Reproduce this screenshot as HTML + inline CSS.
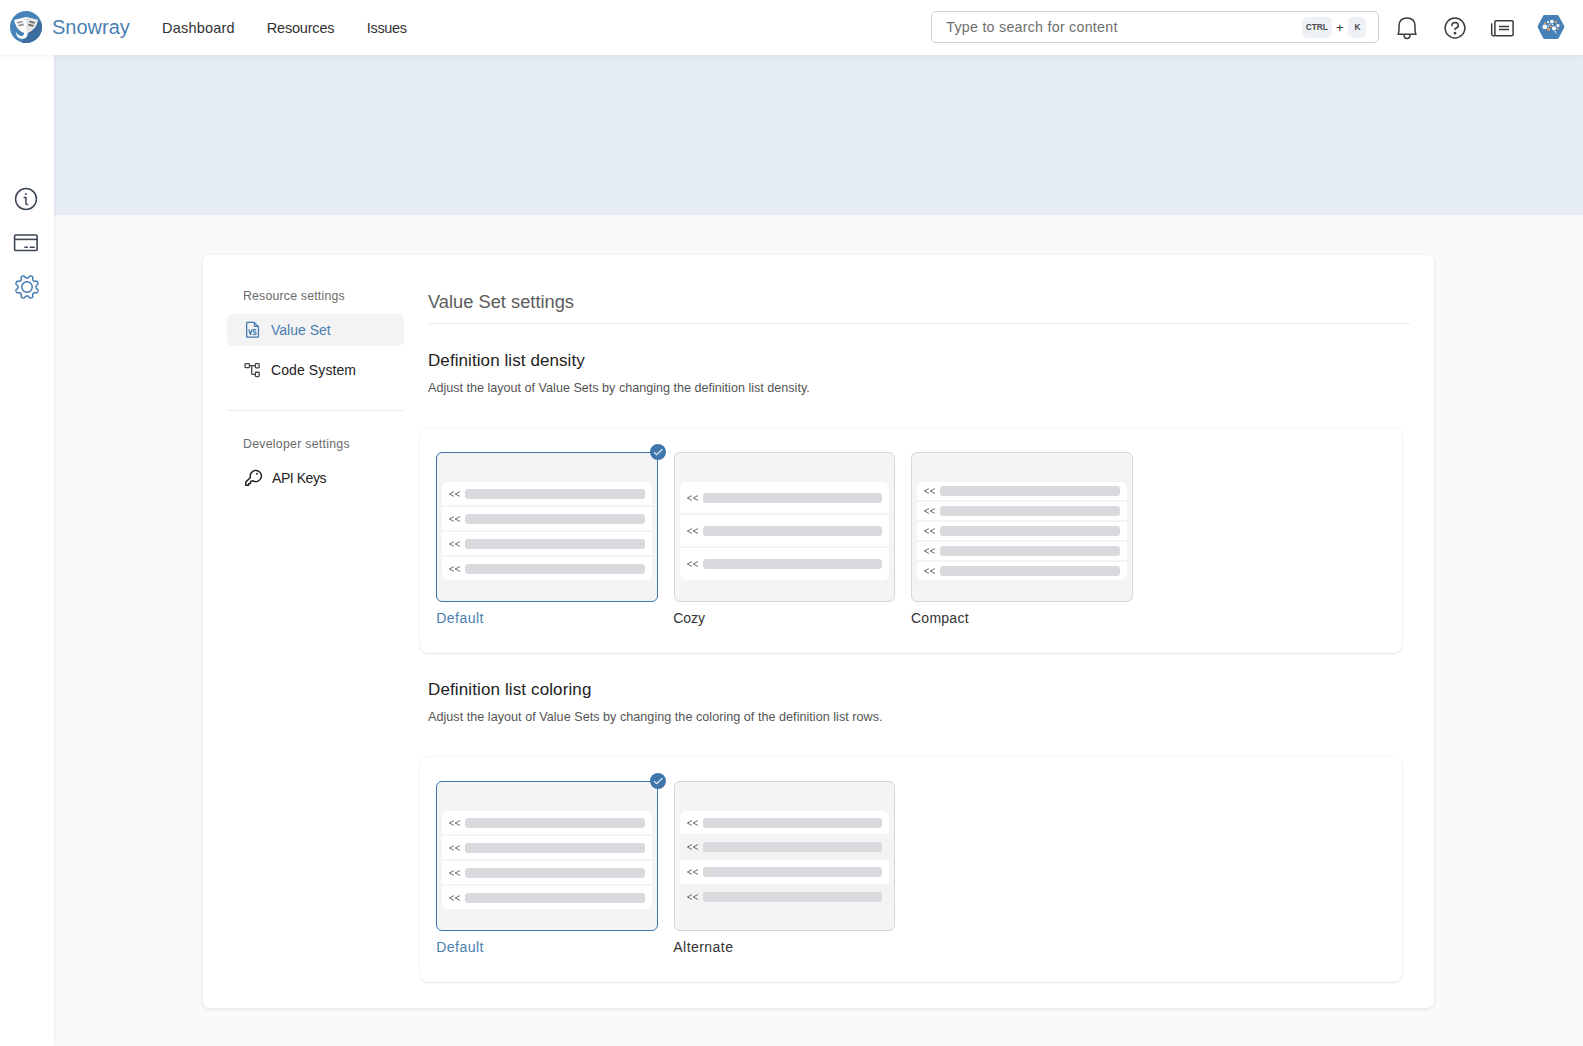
<!DOCTYPE html>
<html><head><meta charset="utf-8">
<style>
*{box-sizing:border-box;margin:0;padding:0}
html,body{width:1583px;height:1046px;overflow:hidden}
body{background:#f8fafc;font-family:"Liberation Sans",sans-serif;position:relative;color:#222}
.t{position:absolute;white-space:nowrap;line-height:1}
#header{position:absolute;left:0;top:0;width:1583px;height:55px;background:#fff;box-shadow:0 1px 5px rgba(0,0,0,.06);z-index:5}
#side{position:absolute;left:0;top:55px;width:54px;height:991px;background:#fff;box-shadow:1px 0 3px rgba(0,0,0,.05);z-index:4}
#banner{position:absolute;left:54px;top:55px;width:1529px;height:160px;background:#e6ecf4}
#card{position:absolute;left:203px;top:255px;width:1231px;height:753px;background:#fff;border-radius:7px;box-shadow:0 1px 4px rgba(0,0,0,.1)}
.sec{position:absolute;left:420px;width:982px;height:225px;background:#fff;border-radius:8px;box-shadow:0 0 0 1px rgba(0,0,0,.035),0 1px 2px rgba(0,0,0,.07)}
.pv{position:absolute;width:222px;height:150px;background:#f4f4f4;border:1px solid #d6d6d6;border-radius:6px}
.pv.sel{border-color:#4077ab}
.lst{position:absolute;left:5px;top:29px;width:210px;height:98px;border-radius:6px;overflow:hidden}
.row{position:absolute;left:0;width:210px;background:#fff}
.row .ch{position:absolute;left:6px}
.row .bar{position:absolute;left:23px;width:180px;height:10px;border-radius:3px;background:#d9dadd}
.chk{position:absolute;width:16px;height:16px;border-radius:50%;background:#4077ab}
.lbl{font-size:14px;color:#333}
.lbl.on{color:#4a7eb0}
</style></head><body>
<div id="header">
  <svg style="position:absolute;left:10px;top:11px" width="32" height="32" viewBox="0 0 32 32">
    <defs><clipPath id="cc"><circle cx="16" cy="16" r="16"/></clipPath></defs>
    <circle cx="16" cy="16" r="16" fill="#4683b9"/>
    <path clip-path="url(#cc)" d="M27.9 9 L40 18 L30 40 L11 40 L12.8 27.9 L17.3 24.8 L18.6 21.4 L22.8 18.6 L26.2 14.2 Z" fill="#3b6e9c"/>
    <path d="M4 9 Q10 7.4 16.2 6.1 Q22 7.6 27.9 9 Q27.2 12.2 26.2 14.2 Q24.8 16.8 22.8 18.6 Q20.8 20.4 18.4 21.6 Q17.6 22.2 17.5 23.5 Q17.4 25 16.4 26.2 Q14.8 28 12.4 28 Q9.6 28 7.6 26 Q6 24 5.9 21.1 Q7.2 23.3 9.4 24.4 Q11.4 25.4 13 24.4 Q14.4 23.4 14.2 22.1 Q11.4 20.8 9.4 19.3 Q7.4 17.6 6.3 15.2 Q4.8 12.2 4 9 Z" fill="#ffffff"/>
    <path d="M16.2 6.1 Q22 7.6 27.9 9 Q27.2 12.2 26.2 14.2 Q24.8 16.8 22.8 18.6 Q20.8 20.4 18.4 21.6 Q17.4 22.2 16.2 22.4 Z" fill="#e6e6e6"/>
    <path d="M7.1 11.8 L12.6 10.6 M8.3 14.7 L13.8 13.5" stroke="#9c9c9c" stroke-width="1.8"/>
    <path d="M19.3 10.5 L24.7 11.9 M18.3 13.6 L23.6 14.8" stroke="#6a6a6a" stroke-width="1.8"/>
    <circle cx="14.2" cy="8.6" r="0.45" fill="#4683b9"/><circle cx="17.6" cy="8.6" r="0.45" fill="#4683b9"/>
  </svg>
  <div class="t" style="left:52px;top:16.9px;font-size:20px;color:#4a7fb5">Snowray</div>
  <div class="t" style="left:162px;top:20.6px;font-size:14.5px;letter-spacing:0.2px;color:#333">Dashboard</div>
  <div class="t" style="left:266.8px;top:20.6px;font-size:14.5px;letter-spacing:-0.2px;color:#333">Resources</div>
  <div class="t" style="left:366.8px;top:20.6px;font-size:14.5px;letter-spacing:-0.35px;color:#333">Issues</div>
  <!-- search -->
  <div style="position:absolute;left:931px;top:11px;width:448px;height:32px;border:1px solid #cfd3d9;border-radius:5px;background:#fff"></div>
  <div class="t" style="left:946.3px;top:20px;font-size:14.2px;letter-spacing:0.28px;color:#6e6e6e">Type to search for content</div>
  <div style="position:absolute;left:1302px;top:17px;width:30px;height:20px;border-radius:5px;background:#eef2f7;box-shadow:0 1px 1px rgba(0,0,0,.06)"></div>
  <div class="t" style="left:1305.8px;top:22.9px;font-size:8.4px;font-weight:700;letter-spacing:-0.1px;color:#4a4a4a">CTRL</div>
  <div class="t" style="left:1336px;top:20.6px;font-size:13px;color:#333">+</div>
  <div style="position:absolute;left:1348px;top:17px;width:18px;height:20px;border-radius:5px;background:#eef2f7;box-shadow:0 1px 1px rgba(0,0,0,.06)"></div>
  <div class="t" style="left:1354.5px;top:22.9px;font-size:8.4px;font-weight:700;color:#4a4a4a">K</div>
  <!-- bell -->
  <svg style="position:absolute;left:1395px;top:15px" width="24" height="26" viewBox="0 0 24 26" fill="none" stroke="#3c3c3c" stroke-width="1.5" stroke-linejoin="round">
    <path d="M3 19.3 Q4 17.5 4 14 L4 10.5 Q4.5 3 12 3 Q19.5 3 20 10.5 L20 14 Q20 17.5 21 19.3 Z"/>
    <path d="M9 19.8 Q9 23.6 12 23.6 Q15 23.6 15 19.8"/>
  </svg>
  <!-- help -->
  <svg style="position:absolute;left:1443px;top:16px" width="24" height="24" viewBox="0 0 24 24" fill="none" stroke="#3c3c3c" stroke-width="1.5">
    <circle cx="12" cy="12" r="9.9"/>
    <path d="M8.8 10.3 Q8.9 6.6 12 6.6 Q15.3 6.7 15.3 9.6 Q15.2 11.6 12.1 12.7 L12.1 13.9"/>
    <circle cx="12.05" cy="17.2" r="0.65" fill="#3c3c3c"/>
  </svg>
  <!-- news -->
  <svg style="position:absolute;left:1488px;top:17px" width="28" height="22" viewBox="0 0 28 22" fill="none" stroke="#3c3c3c" stroke-width="1.5" stroke-linejoin="round">
    <rect x="6.9" y="3.7" width="18.2" height="15" rx="1.2"/>
    <path d="M3.7 6.3 L3.7 17 Q3.7 18.7 5.3 18.7 L7 18.7"/>
    <path d="M11 9.4 L21 9.4 M11 12.4 L21 12.4"/>
  </svg>
  <!-- avatar -->
  <svg style="position:absolute;left:1537px;top:14px" width="28" height="26" viewBox="0 0 28 26">
    <path d="M6.2 1.6 Q6.8 1 7.8 1 L20 1 Q21 1 21.6 1.8 L27 11.6 Q27.5 12.8 27 14 L21.6 24.2 Q21 25 20 25 L7.8 25 Q6.8 25 6.2 24.2 L1 14 Q0.5 12.8 1 11.6 Z" fill="#4682b8"/>
    <g fill="#fff">
      <circle cx="7.8" cy="12.9" r="2.4"/>
      <circle cx="10.9" cy="8" r="1.1"/>
      <circle cx="14.9" cy="7.6" r="1.9"/>
      <circle cx="20.9" cy="11.6" r="1.6"/>
      <circle cx="17" cy="14.4" r="2.1"/>
      <circle cx="11.3" cy="12.3" r="0.7"/>
      <circle cx="12.3" cy="10.2" r="0.7"/>
      <circle cx="15.6" cy="10.6" r="0.8"/>
      <circle cx="18.2" cy="17.8" r="0.7"/>
      <circle cx="19.3" cy="19.2" r="0.55"/>
    </g>
    <g fill="#f5a458">
      <circle cx="7.9" cy="9.3" r="1"/>
      <circle cx="18.9" cy="8.3" r="1.1"/>
      <circle cx="13.8" cy="12.3" r="0.95"/>
      <circle cx="11.5" cy="15.3" r="1.5"/>
      <circle cx="20.8" cy="14.7" r="0.9"/>
    </g>
  </svg>
</div>

<div id="side">
  <!-- info -->
  <svg style="position:absolute;left:13px;top:131px" width="26" height="26" viewBox="0 0 26 26" fill="none" stroke="#3e4756" stroke-width="1.5">
    <circle cx="13" cy="13" r="10.45"/>
    <path d="M11.1 11.5 L12.9 11.5 L12.9 17.4 Q12.9 18.6 14.6 18.6" stroke-width="1.5" stroke-linecap="round"/>
    <circle cx="12.8" cy="7.9" r="1" fill="#3e4756" stroke="none"/>
  </svg>
  <!-- card -->
  <svg style="position:absolute;left:12px;top:177px" width="28" height="22" viewBox="0 0 28 22" fill="none" stroke="#3e4756" stroke-width="1.6">
    <rect x="2.6" y="2.95" width="22.5" height="15.6" rx="1.1"/>
    <path d="M2.6 7.4 L25.1 7.4"/>
    <path d="M12.9 15.2 L15.3 15.2 M18.3 15.2 L22.2 15.2" stroke-linecap="round"/>
  </svg>
  <!-- gear -->
  <svg style="position:absolute;left:12px;top:217px" width="30" height="30" viewBox="0 0 30 30" fill="none" stroke="#3f79b2" stroke-width="1.45" stroke-linejoin="round">
    <path d="M15.00 6.00 L15.24 6.00 L15.47 5.99 L15.71 5.96 L15.96 5.89 L16.22 5.75 L16.51 5.49 L16.84 5.08 L17.21 4.62 L17.58 4.24 L17.94 4.02 L18.28 3.93 L18.59 3.94 L18.90 4.00 L19.19 4.08 L19.48 4.19 L19.76 4.32 L20.03 4.46 L20.28 4.64 L20.51 4.86 L20.69 5.15 L20.78 5.56 L20.78 6.10 L20.71 6.69 L20.66 7.21 L20.68 7.60 L20.76 7.88 L20.89 8.10 L21.04 8.29 L21.20 8.47 L21.36 8.64 L21.53 8.80 L21.71 8.96 L21.90 9.11 L22.12 9.24 L22.40 9.32 L22.79 9.34 L23.31 9.29 L23.90 9.22 L24.44 9.22 L24.85 9.31 L25.14 9.49 L25.36 9.72 L25.54 9.97 L25.68 10.24 L25.81 10.52 L25.92 10.81 L26.00 11.10 L26.06 11.41 L26.07 11.72 L25.98 12.06 L25.76 12.42 L25.38 12.79 L24.92 13.16 L24.51 13.49 L24.25 13.78 L24.11 14.04 L24.04 14.29 L24.01 14.53 L24.00 14.76 L24.00 15.00 L24.00 15.24 L24.01 15.47 L24.04 15.71 L24.11 15.96 L24.25 16.22 L24.51 16.51 L24.92 16.84 L25.38 17.21 L25.76 17.58 L25.98 17.94 L26.07 18.28 L26.06 18.59 L26.00 18.90 L25.92 19.19 L25.81 19.48 L25.68 19.76 L25.54 20.03 L25.36 20.28 L25.14 20.51 L24.85 20.69 L24.44 20.78 L23.90 20.78 L23.31 20.71 L22.79 20.66 L22.40 20.68 L22.12 20.76 L21.90 20.89 L21.71 21.04 L21.53 21.20 L21.36 21.36 L21.20 21.53 L21.04 21.71 L20.89 21.90 L20.76 22.12 L20.68 22.40 L20.66 22.79 L20.71 23.31 L20.78 23.90 L20.78 24.44 L20.69 24.85 L20.51 25.14 L20.28 25.36 L20.03 25.54 L19.76 25.68 L19.48 25.81 L19.19 25.92 L18.90 26.00 L18.59 26.06 L18.28 26.07 L17.94 25.98 L17.58 25.76 L17.21 25.38 L16.84 24.92 L16.51 24.51 L16.22 24.25 L15.96 24.11 L15.71 24.04 L15.47 24.01 L15.24 24.00 L15.00 24.00 L14.76 24.00 L14.53 24.01 L14.29 24.04 L14.04 24.11 L13.78 24.25 L13.49 24.51 L13.16 24.92 L12.79 25.38 L12.42 25.76 L12.06 25.98 L11.72 26.07 L11.41 26.06 L11.10 26.00 L10.81 25.92 L10.52 25.81 L10.24 25.68 L9.97 25.54 L9.72 25.36 L9.49 25.14 L9.31 24.85 L9.22 24.44 L9.22 23.90 L9.29 23.31 L9.34 22.79 L9.32 22.40 L9.24 22.12 L9.11 21.90 L8.96 21.71 L8.80 21.53 L8.64 21.36 L8.47 21.20 L8.29 21.04 L8.10 20.89 L7.88 20.76 L7.60 20.68 L7.21 20.66 L6.69 20.71 L6.10 20.78 L5.56 20.78 L5.15 20.69 L4.86 20.51 L4.64 20.28 L4.46 20.03 L4.32 19.76 L4.19 19.48 L4.08 19.19 L4.00 18.90 L3.94 18.59 L3.93 18.28 L4.02 17.94 L4.24 17.58 L4.62 17.21 L5.08 16.84 L5.49 16.51 L5.75 16.22 L5.89 15.96 L5.96 15.71 L5.99 15.47 L6.00 15.24 L6.00 15.00 L6.00 14.76 L5.99 14.53 L5.96 14.29 L5.89 14.04 L5.75 13.78 L5.49 13.49 L5.08 13.16 L4.62 12.79 L4.24 12.42 L4.02 12.06 L3.93 11.72 L3.94 11.41 L4.00 11.10 L4.08 10.81 L4.19 10.52 L4.32 10.24 L4.46 9.97 L4.64 9.72 L4.86 9.49 L5.15 9.31 L5.56 9.22 L6.10 9.22 L6.69 9.29 L7.21 9.34 L7.60 9.32 L7.88 9.24 L8.10 9.11 L8.29 8.96 L8.47 8.80 L8.64 8.64 L8.80 8.47 L8.96 8.29 L9.11 8.10 L9.24 7.88 L9.32 7.60 L9.34 7.21 L9.29 6.69 L9.22 6.10 L9.22 5.56 L9.31 5.15 L9.49 4.86 L9.72 4.64 L9.97 4.46 L10.24 4.32 L10.52 4.19 L10.81 4.08 L11.10 4.00 L11.41 3.94 L11.72 3.93 L12.06 4.02 L12.42 4.24 L12.79 4.62 L13.16 5.08 L13.49 5.49 L13.78 5.75 L14.04 5.89 L14.29 5.96 L14.53 5.99 L14.76 6.00Z"/>
    <circle cx="15" cy="15" r="5.25"/>
  </svg>
</div>

<div id="banner"></div>
<div id="card"></div>

<!-- settings nav -->
<div class="t" style="left:243px;top:289.6px;font-size:12.3px;letter-spacing:0.2px;color:#6b6b6b">Resource settings</div>
<div style="position:absolute;left:227px;top:314px;width:177px;height:32px;background:#f3f3f3;border-radius:6px"></div>
<svg style="position:absolute;left:244px;top:320px" width="16" height="19" viewBox="0 0 16 19" fill="none" stroke="#4179b0" stroke-width="1.3" stroke-linejoin="round">
  <path d="M3.4 2.35 L10.1 2.35 L14.45 6.7 L14.45 16.4 Q14.45 17.15 13.7 17.15 L3.4 17.15 Q2.65 17.15 2.65 16.4 L2.65 3.1 Q2.65 2.35 3.4 2.35 Z"/>
  <path d="M10.4 2.6 L10.4 6.4 L14.2 6.4" stroke-width="1.1"/>
  <path d="M4.8 9.4 L6.45 14.5 L8.1 9.4" stroke-width="1.35"/>
  <path d="M12.1 9.9 Q11.4 9.3 10.5 9.3 Q9.1 9.4 9.1 10.7 Q9.2 11.7 10.6 12 Q12.1 12.4 12.1 13.4 Q12 14.6 10.5 14.6 Q9.5 14.6 8.9 14" stroke-width="1.3"/>
</svg>
<div class="t" style="left:271px;top:323.2px;font-size:14px;color:#4a7eb0">Value Set</div>
<svg style="position:absolute;left:243px;top:361px" width="19" height="18" viewBox="0 0 19 18" fill="none" stroke="#444" stroke-width="1.3">
  <rect x="2.05" y="2.55" width="4.4" height="4.1" rx="0.8"/>
  <rect x="12.35" y="2.55" width="3.8" height="4.4" rx="0.8"/>
  <rect x="12.35" y="11.25" width="3.8" height="4.4" rx="0.8"/>
  <path d="M6.45 4.6 L12.35 4.6 M8.7 4.6 L8.7 12.4 Q8.7 13.45 9.8 13.45 L12.35 13.45"/>
</svg>
<div class="t" style="left:271px;top:363px;font-size:14px;letter-spacing:0.1px;color:#222">Code System</div>
<div style="position:absolute;left:227px;top:410px;width:177px;height:1px;background:#ececec"></div>
<div class="t" style="left:243px;top:437.6px;font-size:12.3px;letter-spacing:0.28px;color:#6b6b6b">Developer settings</div>
<svg style="position:absolute;left:242px;top:467px" width="22" height="22" viewBox="0 0 22 22" fill="none" stroke="#1a1a1a" stroke-width="1.4" stroke-linejoin="round">
  <path d="M8.4 10.4 L3.8 15 L3.8 18.3 L6.6 18.3 L6.6 16.6 L8.5 16.6 L8.5 14.7 L10.6 13.6 A5.6 5.6 0 1 0 8.4 10.4 Z"/>
  <rect x="14.1" y="5.9" width="1.6" height="1.6" fill="#1a1a1a" stroke="none"/>
</svg>
<div class="t" style="left:272px;top:471.3px;font-size:14px;letter-spacing:-0.45px;color:#222">API Keys</div>

<!-- main -->
<div class="t" style="left:428px;top:292.5px;font-size:18.3px;color:#5c5c5c">Value Set settings</div>
<div style="position:absolute;left:428px;top:323px;width:982px;height:1px;background:#ececec"></div>
<div class="t" style="left:428px;top:351.6px;font-size:17px;letter-spacing:0.08px;color:#222">Definition list density</div>
<div class="t" style="left:428px;top:381.6px;font-size:12.6px;color:#555">Adjust the layout of Value Sets by changing the definition list density.</div>

<div class="sec" style="top:428px"></div>

<!-- density previews -->
<div class="pv sel" style="left:436px;top:452px">
  <div class="lst">
    <div class="row" style="top:0;height:23px"><svg class="ch" style="top:7.90px" width="14" height="8" viewBox="0 0 14 8"><path d="M5.9 1.6 L1.35 4 L5.9 6.4 M11.96 1.6 L7.2 4 L11.96 6.4" fill="none" stroke="#626262" stroke-width="0.95"/></svg><span class="bar" style="top:6.5px"></span></div>
    <div class="row" style="top:25px;height:23px"><svg class="ch" style="top:7.90px" width="14" height="8" viewBox="0 0 14 8"><path d="M5.9 1.6 L1.35 4 L5.9 6.4 M11.96 1.6 L7.2 4 L11.96 6.4" fill="none" stroke="#626262" stroke-width="0.95"/></svg><span class="bar" style="top:6.5px"></span></div>
    <div class="row" style="top:50px;height:23px"><svg class="ch" style="top:7.90px" width="14" height="8" viewBox="0 0 14 8"><path d="M5.9 1.6 L1.35 4 L5.9 6.4 M11.96 1.6 L7.2 4 L11.96 6.4" fill="none" stroke="#626262" stroke-width="0.95"/></svg><span class="bar" style="top:6.5px"></span></div>
    <div class="row" style="top:75px;height:23px"><svg class="ch" style="top:7.90px" width="14" height="8" viewBox="0 0 14 8"><path d="M5.9 1.6 L1.35 4 L5.9 6.4 M11.96 1.6 L7.2 4 L11.96 6.4" fill="none" stroke="#626262" stroke-width="0.95"/></svg><span class="bar" style="top:6.5px"></span></div>
  </div>
</div>
<div class="chk" style="left:650px;top:444px"><svg width="16" height="16" viewBox="0 0 16 16"><path d="M4.05 8.2 L6.6 10.6 L12.4 5.3" fill="none" stroke="#e3eaf2" stroke-width="1.2"/></svg></div>

<div class="pv" style="left:674px;top:452px;width:221px">
  <div class="lst" style="width:209px">
    <div class="row" style="width:209px;top:0;height:31px"><svg class="ch" style="top:11.90px" width="14" height="8" viewBox="0 0 14 8"><path d="M5.9 1.6 L1.35 4 L5.9 6.4 M11.96 1.6 L7.2 4 L11.96 6.4" fill="none" stroke="#626262" stroke-width="0.95"/></svg><span class="bar" style="width:179px;top:10.5px"></span></div>
    <div class="row" style="width:209px;top:33px;height:31px"><svg class="ch" style="top:11.90px" width="14" height="8" viewBox="0 0 14 8"><path d="M5.9 1.6 L1.35 4 L5.9 6.4 M11.96 1.6 L7.2 4 L11.96 6.4" fill="none" stroke="#626262" stroke-width="0.95"/></svg><span class="bar" style="width:179px;top:10.5px"></span></div>
    <div class="row" style="width:209px;top:66px;height:32px"><svg class="ch" style="top:11.90px" width="14" height="8" viewBox="0 0 14 8"><path d="M5.9 1.6 L1.35 4 L5.9 6.4 M11.96 1.6 L7.2 4 L11.96 6.4" fill="none" stroke="#626262" stroke-width="0.95"/></svg><span class="bar" style="width:179px;top:10.5px"></span></div>
  </div>
</div>

<div class="pv" style="left:911px;top:452px">
  <div class="lst">
    <div class="row" style="top:0;height:18px"><svg class="ch" style="top:5.40px" width="14" height="8" viewBox="0 0 14 8"><path d="M5.9 1.6 L1.35 4 L5.9 6.4 M11.96 1.6 L7.2 4 L11.96 6.4" fill="none" stroke="#626262" stroke-width="0.95"/></svg><span class="bar" style="top:4px"></span></div>
    <div class="row" style="top:20px;height:18px"><svg class="ch" style="top:5.40px" width="14" height="8" viewBox="0 0 14 8"><path d="M5.9 1.6 L1.35 4 L5.9 6.4 M11.96 1.6 L7.2 4 L11.96 6.4" fill="none" stroke="#626262" stroke-width="0.95"/></svg><span class="bar" style="top:4px"></span></div>
    <div class="row" style="top:40px;height:18px"><svg class="ch" style="top:5.40px" width="14" height="8" viewBox="0 0 14 8"><path d="M5.9 1.6 L1.35 4 L5.9 6.4 M11.96 1.6 L7.2 4 L11.96 6.4" fill="none" stroke="#626262" stroke-width="0.95"/></svg><span class="bar" style="top:4px"></span></div>
    <div class="row" style="top:60px;height:18px"><svg class="ch" style="top:5.40px" width="14" height="8" viewBox="0 0 14 8"><path d="M5.9 1.6 L1.35 4 L5.9 6.4 M11.96 1.6 L7.2 4 L11.96 6.4" fill="none" stroke="#626262" stroke-width="0.95"/></svg><span class="bar" style="top:4px"></span></div>
    <div class="row" style="top:80px;height:18px"><svg class="ch" style="top:5.40px" width="14" height="8" viewBox="0 0 14 8"><path d="M5.9 1.6 L1.35 4 L5.9 6.4 M11.96 1.6 L7.2 4 L11.96 6.4" fill="none" stroke="#626262" stroke-width="0.95"/></svg><span class="bar" style="top:4px"></span></div>
  </div>
</div>

<div class="t lbl on" style="left:436.3px;top:611.2px;letter-spacing:0.45px">Default</div>
<div class="t lbl" style="left:673.3px;top:611.2px;letter-spacing:-0.1px">Cozy</div>
<div class="t lbl" style="left:911px;top:611.2px;letter-spacing:0.25px">Compact</div>

<!-- coloring -->
<div class="t" style="left:428px;top:680.5px;font-size:17px;letter-spacing:0.12px;color:#222">Definition list coloring</div>
<div class="t" style="left:428px;top:711.3px;font-size:12.6px;letter-spacing:0.03px;color:#555">Adjust the layout of Value Sets by changing the coloring of the definition list rows.</div>

<div class="sec" style="top:757px"></div>

<div class="pv sel" style="left:436px;top:781px">
  <div class="lst">
    <div class="row" style="top:0;height:23px"><svg class="ch" style="top:7.90px" width="14" height="8" viewBox="0 0 14 8"><path d="M5.9 1.6 L1.35 4 L5.9 6.4 M11.96 1.6 L7.2 4 L11.96 6.4" fill="none" stroke="#626262" stroke-width="0.95"/></svg><span class="bar" style="top:6.5px"></span></div>
    <div class="row" style="top:25px;height:23px"><svg class="ch" style="top:7.90px" width="14" height="8" viewBox="0 0 14 8"><path d="M5.9 1.6 L1.35 4 L5.9 6.4 M11.96 1.6 L7.2 4 L11.96 6.4" fill="none" stroke="#626262" stroke-width="0.95"/></svg><span class="bar" style="top:6.5px"></span></div>
    <div class="row" style="top:50px;height:23px"><svg class="ch" style="top:7.90px" width="14" height="8" viewBox="0 0 14 8"><path d="M5.9 1.6 L1.35 4 L5.9 6.4 M11.96 1.6 L7.2 4 L11.96 6.4" fill="none" stroke="#626262" stroke-width="0.95"/></svg><span class="bar" style="top:6.5px"></span></div>
    <div class="row" style="top:75px;height:23px"><svg class="ch" style="top:7.90px" width="14" height="8" viewBox="0 0 14 8"><path d="M5.9 1.6 L1.35 4 L5.9 6.4 M11.96 1.6 L7.2 4 L11.96 6.4" fill="none" stroke="#626262" stroke-width="0.95"/></svg><span class="bar" style="top:6.5px"></span></div>
  </div>
</div>
<div class="chk" style="left:650px;top:773px"><svg width="16" height="16" viewBox="0 0 16 16"><path d="M4.05 8.2 L6.6 10.6 L12.4 5.3" fill="none" stroke="#e3eaf2" stroke-width="1.2"/></svg></div>

<div class="pv" style="left:674px;top:781px;width:221px">
  <div class="lst" style="width:209px">
    <div class="row" style="width:209px;top:0;height:23px"><svg class="ch" style="top:7.90px" width="14" height="8" viewBox="0 0 14 8"><path d="M5.9 1.6 L1.35 4 L5.9 6.4 M11.96 1.6 L7.2 4 L11.96 6.4" fill="none" stroke="#626262" stroke-width="0.95"/></svg><span class="bar" style="width:179px;top:6.5px"></span></div>
    <div class="row" style="width:209px;top:23px;height:26px;background:#f3f3f3"><svg class="ch" style="top:9.40px" width="14" height="8" viewBox="0 0 14 8"><path d="M5.9 1.6 L1.35 4 L5.9 6.4 M11.96 1.6 L7.2 4 L11.96 6.4" fill="none" stroke="#626262" stroke-width="0.95"/></svg><span class="bar" style="width:179px;top:8px"></span></div>
    <div class="row" style="width:209px;top:49px;height:24px"><svg class="ch" style="top:8.40px" width="14" height="8" viewBox="0 0 14 8"><path d="M5.9 1.6 L1.35 4 L5.9 6.4 M11.96 1.6 L7.2 4 L11.96 6.4" fill="none" stroke="#626262" stroke-width="0.95"/></svg><span class="bar" style="width:179px;top:7px"></span></div>
    <div class="row" style="width:209px;top:73px;height:25px;background:#f3f3f3"><svg class="ch" style="top:9.40px" width="14" height="8" viewBox="0 0 14 8"><path d="M5.9 1.6 L1.35 4 L5.9 6.4 M11.96 1.6 L7.2 4 L11.96 6.4" fill="none" stroke="#626262" stroke-width="0.95"/></svg><span class="bar" style="width:179px;top:8px"></span></div>
  </div>
</div>

<div class="t lbl on" style="left:436.3px;top:940.2px;letter-spacing:0.45px">Default</div>
<div class="t lbl" style="left:673.3px;top:940.2px;letter-spacing:0.45px">Alternate</div>

</body></html>
